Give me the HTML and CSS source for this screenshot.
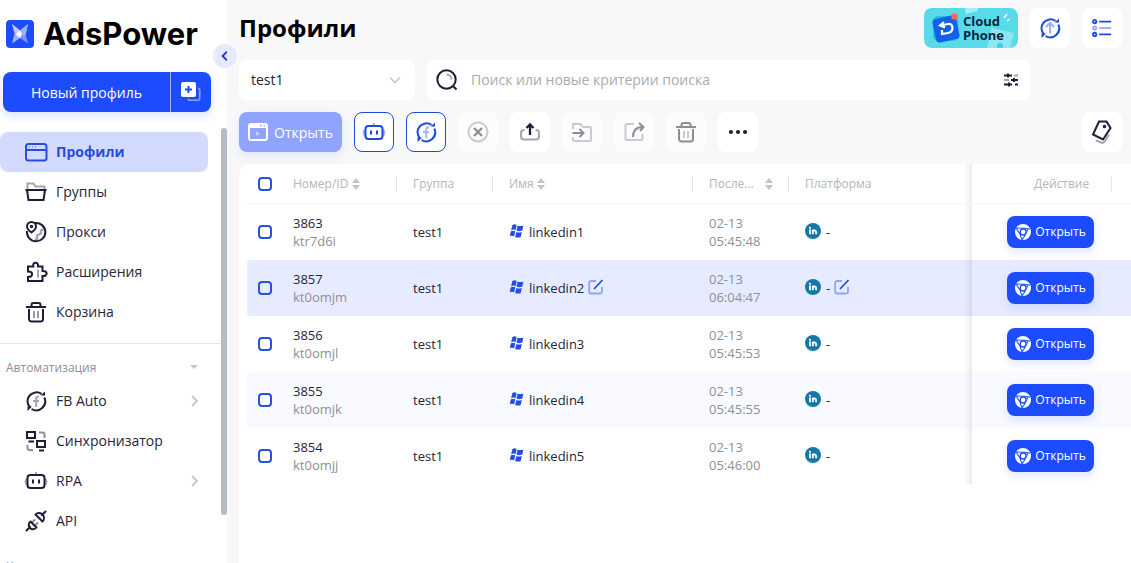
FILE: index.html
```html
<!DOCTYPE html>
<html lang="ru">
<head>
<meta charset="utf-8">
<title>AdsPower — Профили</title>
<link rel="stylesheet" href="styles.css">
</head>
<body>
<svg class="sprite" aria-hidden="true">
  <symbol id="i-robot" viewBox="0 0 24 24"><path d="M12 3v3M3 10c-2 1-2 4.500 0 5.500M21 10c2 1 2 4.500 0 5.500" opacity=".4"/><rect x="3.500" y="6" width="17" height="13" rx="3"/><path d="M9 10.500v4M15 10.500v4"/></symbol>
  <symbol id="i-ring" viewBox="0 0 24 24"><path d="M6 18.500A9 9 0 0 1 17.500 4.800M20.300 8.500A9 9 0 0 1 7.500 20"/><path d="M16.500 6.500h4.500V2.500zM3.500 17.500H8L3.500 22z" fill="currentColor" stroke="none"/></symbol>
  <symbol id="i-fb" viewBox="0 0 24 24"><use href="#i-ring"/><path d="M15 7.500h-.8c-1.500 0-2 .8-2 2V18M9 12h6" opacity=".4"/></symbol>
  <symbol id="i-trash" viewBox="0 0 24 24"><path d="M2 7h20M5 9v10a2.500 2.500 0 0 0 2.500 2.500h9A2.500 2.500 0 0 0 19 19V9M7.500 6.500V5a2 2 0 0 1 2-2h5a2 2 0 0 1 2 2v1.500"/><path d="M10 11v7M14 11v7" opacity=".45"/></symbol>
  <symbol id="i-sort" viewBox="0 0 8 12"><path d="M4 0l4 5H0zM4 12l4-5H0z"/></symbol>
  <symbol id="i-win" viewBox="1.500 1 12 12"><path d="M3.500 1.800c1.300-.8 2.600-.8 3.700 0L6.300 6.300c-1.200-.7-2.500-.7-3.800 0zM8 2.300c1.500.7 3 .6 5 0l-1 4.300c-1.500.7-3.200.8-4.900 0zM2.200 7.300c1.400-.7 2.600-.6 3.800 0l-.9 4.300c-1.200-.7-2.400-.7-3.900 0zM6.900 7.900c1.500.7 3.100.6 4.800 0l-1 4.200c-1.700.8-3.300.7-4.800 0z"/></symbol>
  <symbol id="i-in" viewBox="0 0 16 16"><circle cx="8" cy="8" r="8" fill="#1479a8"/><circle cx="5" cy="4.800" r="1.100" fill="#fff"/><path d="M5 6.600v4.600M7.800 11.200V6.600M7.900 8.800c.3-1.900 3.200-2 3.200.2v2.200" fill="none" stroke="#fff" stroke-width="1.800"/></symbol>
  <symbol id="i-edit" viewBox="0 0 16 16"><path d="M8 2H3a1.800 1.800 0 0 0-1.800 1.800v9A1.800 1.800 0 0 0 3 14.500h9.200a1.800 1.800 0 0 0 1.800-1.800V8" opacity=".45"/><path d="M6 10l8.500-9"/></symbol>
  <symbol id="i-chrome" viewBox="0 0 16 16"><circle cx="8" cy="8" r="8" fill="#fff"/><path d="M0 4.200Q6 3.600 15 5M4.700 9.600L.8 3.800M11 7.800Q10.500 12 6.800 16M13.300 4.600L10.800 9.500M5 9.500Q5.600 13 7.200 15.800" fill="none" stroke="#1d4cff" stroke-width="1.100"/><circle cx="8.200" cy="8" r="3" fill="#fff" stroke="#1d4cff" stroke-width="1.300"/></symbol>
</svg>
<div class="app">
  <aside class="sidebar">
    <a class="brand" href="#">
      <svg class="brand-mark" viewBox="0 0 28 28"><rect width="28" height="28" rx="4" fill="#1d4cff"/><path d="M6 4l8 6.500V18l-8 5.500L8.500 14z" fill="#9fb3ff"/><path d="M22 4l-8 6.500V18l8 5.500-2.500-9.500z" fill="#7b95ff"/><path d="M6 4l11 9-3 5-4-4z" fill="#b9c7ff"/><path d="M22 4l-8 6.500 4 6 2-3z" fill="#9db1ff"/><path d="M13.500 10.500l2.500 3.500-2 4-4-3.500z" fill="#fff"/></svg>
      <span>AdsPower</span>
    </a>
    <div class="new-profile">
      <button class="new-main" type="button">Новый профиль</button>
      <button class="new-batch" type="button" aria-label="Создать несколько профилей"><svg viewBox="0 0 20 20" class="s20"><path d="M17 6.500h.5a1.200 1.200 0 0 1 1.200 1.200v9a1.500 1.500 0 0 1-1.500 1.500H8.500a1.200 1.200 0 0 1-1.200-1.200v-.5" fill="none" stroke="#8aa1ff" stroke-width="1.600"/><rect width="15" height="15" rx="2" fill="#fff"/><path d="M7.500 4v7M4 7.500h7" stroke="#1d4cff" stroke-width="2"/></svg></button>
    </div>
    <div class="nav-area">
      <nav>
        <a class="nav-item active" href="#"><svg class="icon" viewBox="0 0 24 24"><rect x="2" y="4" width="20.500" height="16.500" rx="2.500"/><path d="M2 10h20.500"/><path d="M5 7h1M8 7h1M11 7h1" opacity=".4"/></svg><span>Профили</span></a>
        <a class="nav-item" href="#"><svg class="icon" viewBox="0 0 24 24"><path d="M3.500 9V3.500h6l2 3h9V9" opacity=".4"/><path d="M1.500 10h21M3 10l1.500 10h15L21 10"/></svg><span>Группы</span></a>
        <a class="nav-item" href="#"><svg class="icon" viewBox="0 0 24 24"><path d="M20 9l-3 1.500v3l-4 2V19l-2 1" opacity=".4" stroke-width="2.400"/><path d="M11 3a9.200 9.200 0 1 1-8 8"/><path d="M7.500 12.500C4 10 3 8 3 6.500a4.500 4.500 0 0 1 9 0c0 1.500-1 3.500-4.500 6z"/><circle cx="7.500" cy="6.500" r=".8"/></svg><span>Прокси</span></a>
        <a class="nav-item" href="#"><svg class="icon" viewBox="0 0 24 24"><path d="M4 6.500h5.300C8 1.500 15 1.500 14 6.500h4.500V11c5.500-.5 5.500 5.500 0 5v5H4v-4c5.500 0 5.500-6 0-5.500z"/><path d="M14 9.500v8" opacity=".4"/></svg><span>Расширения</span></a>
        <a class="nav-item" href="#"><svg class="icon"><use href="#i-trash"/></svg><span>Корзина</span></a>
        <hr class="nav-line">
        <button class="nav-label" type="button"><span>Автоматизация</span><svg class="caret" viewBox="0 0 10 6"><path d="M1 1h8L5 5z"/></svg></button>
        <a class="nav-item" href="#"><svg class="icon"><use href="#i-fb"/></svg><span>FB Auto</span><svg class="arrow" viewBox="0 0 10 12"><path d="M2 1l5 5-5 5"/></svg></a>
        <a class="nav-item" href="#"><svg class="icon" viewBox="0 0 24 24"><path d="M15 3.500h3.500a2 2 0 0 1 2 2V9M9 21H5.500a2 2 0 0 1-2-2v-3" opacity=".5"/><rect x="3" y="3" width="8" height="6"/><rect x="13" y="12" width="8" height="6"/><path d="M4.500 12.500H10M15 21.500h5"/></svg><span>Синхронизатор</span></a>
        <a class="nav-item" href="#"><svg class="icon"><use href="#i-robot"/></svg><span>RPA</span><svg class="arrow" viewBox="0 0 10 12"><path d="M2 1l5 5-5 5"/></svg></a>
        <a class="nav-item" href="#"><svg class="icon round" viewBox="0 0 24 24"><path d="M2.500 21.500L6 18M6.500 12.500l6 6c-2 2.500-5 2-6.500.5S4 14.500 6.500 12.500zM21.500 2.500L18 6M11.500 5.500l7 7c2.500-2.500 1.500-5.500 0-7s-4.500-2.500-7 0z"/><path d="M8.500 13l2-2M11.500 16l2-2" opacity=".5"/></svg><span>API</span></a>
        <button class="nav-label nav-label-next" type="button"><span>Команда</span><svg class="caret" viewBox="0 0 10 6"><path d="M1 1h8L5 5z"/></svg></button>
      </nav>
      <div class="scroll-thumb"></div>
    </div>
    <button class="collapse" type="button" aria-label="Свернуть меню"><svg viewBox="0 0 10 10"><path d="M6.500 1.500L3 5l3.500 3.500"/></svg></button>
  </aside>

  <main class="main">
    <header class="top">
      <h1>Профили</h1>
      <a class="cloud" href="#">
        <svg class="cloud-art" viewBox="0 0 94 40"><rect width="94" height="40" fill="#58dbe9"/><path d="M41 0h13v3l-12 3z" fill="#a5edf4"/><path d="M68 20l22 5-4 15H63z" fill="#8ce8f0"/><path d="M73 38a3 3 0 0 1 6 0v2h-6z" fill="#45cfe0"/><rect x="9" y="8" width="25" height="25" rx="5" fill="#31b9dd"/><rect x="10" y="9" width="24" height="24" rx="4" fill="#1261e8" transform="rotate(-12 22 21)"/><path d="M20 14l-4 3.500 5 2M17 17.500l7-1.500c6-1 6 8 0 9l-6 1v-4" fill="none" stroke="#fff" stroke-width="2.200"/><circle cx="30.500" cy="8.500" r="3.200" fill="#ff6450"/><path d="M80 10l3-4M83 13l3-2" stroke="#fff" stroke-width="1.500"/></svg>
        <span class="cloud-text">Cloud Phone</span>
      </a>
      <button class="tile blue" type="button" aria-label="Обновить"><svg class="icon" viewBox="0 0 24 24"><use href="#i-ring"/><path d="M12 17.500V8M8 11l4-4 4 4" opacity=".45"/></svg></button>
      <button class="tile blue" type="button" aria-label="Список"><svg class="icon" viewBox="0 0 24 24"><circle cx="4" cy="5" r="1.800"/><path d="M9 5h13M9 19h13"/><circle cx="4" cy="19" r="1.800"/><g opacity=".45"><circle cx="4" cy="12" r="1.800"/><path d="M9 12h13"/></g></svg></button>
    </header>

    <div class="filters">
      <div class="select-wrap">
        <select aria-label="Группа"><option>test1</option></select>
        <svg class="chev" viewBox="0 0 12 8"><path d="M1 1.500l5 5 5-5"/></svg>
      </div>
      <div class="search">
        <svg class="icon" viewBox="0 0 24 24"><circle cx="11.500" cy="11.500" r="9.200"/><path d="M18.500 18.500l3 3"/><path d="M11.500 6.500a5 5 0 0 1 5 5" opacity=".4"/></svg>
        <input type="search" aria-label="Поиск" placeholder="Поиск или новые критерии поиска">
        <button class="tune" type="button" aria-label="Фильтры"><svg viewBox="0 0 16 14"><path d="M1 2.500h8M5 .5v4M8 7h7M11 5v4M1 11.500h8M6 9.500v4M12 11.500h3"/><path d="M11 2.500h4M1 7h5" opacity=".4"/></svg></button>
      </div>
    </div>

    <div class="toolbar">
      <button class="open-all" type="button"><svg viewBox="0 0 20 18"><rect x="1" y="1" width="18" height="16" rx="2" fill="none" stroke="#fff" stroke-width="2"/><path d="M1 1h18v4H1z" fill="#fff"/><path d="M12 2.500h1.500M15.500 2.500H17" stroke="#8fa3ff" stroke-width="1.500"/><path d="M8 8l4 2.500L8 13z" fill="#c9d3ff"/></svg><span>Открыть</span></button>
      <button class="tile blue outlined" type="button" aria-label="RPA"><svg class="icon"><use href="#i-robot"/></svg></button>
      <button class="tile blue outlined" type="button" aria-label="FB Auto"><svg class="icon"><use href="#i-fb"/></svg></button>
      <button class="tile off" type="button" aria-label="Закрыть" disabled><svg class="icon" viewBox="0 0 24 24"><circle cx="12" cy="12" r="9.500" opacity=".45"/><path d="M8 8l8 8M16 8l-8 8" stroke-width="2.300"/></svg></button>
      <button class="tile" type="button" aria-label="Экспорт"><svg class="icon" viewBox="0 0 24 24"><path d="M6.500 10H6a3 3 0 0 0-3 3v3.500a3 3 0 0 0 3 3h12a3 3 0 0 0 3-3V13a3 3 0 0 0-3-3h-.5" opacity=".4"/><path d="M12 15V5M8.500 8L12 4.500 15.500 8" stroke-width="2.300"/></svg></button>
      <button class="tile off" type="button" aria-label="Переместить в группу" disabled><svg class="icon" viewBox="0 0 24 24"><path d="M3 9V4h7.500l2.500 3h6.500A1.500 1.500 0 0 1 21 8.500v11a1.500 1.500 0 0 1-1.500 1.500h-15A1.500 1.500 0 0 1 3 19.500V17" opacity=".45"/><path d="M2.500 13H13M9.500 9l4 4-4 4"/></svg></button>
      <button class="tile off" type="button" aria-label="Поделиться" disabled><svg class="icon" viewBox="0 0 24 24"><path d="M12 4H5a1.500 1.500 0 0 0-1.500 1.500v13A1.500 1.500 0 0 0 5 20h14a1.500 1.500 0 0 0 1.500-1.500V14" opacity=".45"/><path d="M11 17c0-6 2.500-10 10-10M17 3l4.500 4L18 11"/></svg></button>
      <button class="tile off" type="button" aria-label="Удалить" disabled><svg class="icon"><use href="#i-trash"/></svg></button>
      <button class="tile" type="button" aria-label="Ещё"><svg class="icon dots" viewBox="0 0 24 24"><circle cx="3.500" cy="12" r="2.500"/><circle cx="12" cy="12" r="2.500"/><circle cx="20.500" cy="12" r="2.500"/></svg></button>
      <button class="tile tag" type="button" aria-label="Теги"><svg class="icon" viewBox="0 0 24 24"><path d="M6 20.500l6.500 2.500 2-1.200 4.500-7.300" opacity=".4"/><path d="M9 1.500h7.500l4 6.500-7.500 11.500L3 14.500z"/><circle cx="14.500" cy="6.500" r=".8"/></svg></button>
    </div>

    <section class="panel">
      <table>
        <colgroup><col class="c-check"><col class="c-id"><col class="c-group"><col class="c-name"><col class="c-last"><col><col class="c-act"><col class="c-gear"></colgroup>
        <thead>
          <tr>
            <th><input type="checkbox" aria-label="Выбрать все"></th>
            <th class="sep">Номер/ID <svg class="sort"><use href="#i-sort"/></svg></th>
            <th class="sep">Группа</th>
            <th class="sep">Имя <svg class="sort"><use href="#i-sort"/></svg></th>
            <th class="sep"><span class="spread">После... <svg class="sort"><use href="#i-sort"/></svg></span></th>
            <th>Платформа</th>
            <th class="act sep">Действие</th>
            <th></th>
          </tr>
        </thead>
        <tbody>
          <tr>
            <td><input type="checkbox" aria-label="Выбрать 3863"></td>
            <td>3863<br><span class="muted">ktr7d6i</span></td>
            <td>test1</td>
            <td><span class="inline"><svg class="win"><use href="#i-win"/></svg>linkedin1</span></td>
            <td class="muted">02-13<br>05:45:48</td>
            <td><span class="inline"><svg class="in"><use href="#i-in"/></svg>-</span></td>
            <td class="act"><button class="open" type="button"><svg><use href="#i-chrome"/></svg>Открыть</button></td>
            <td></td>
          </tr>
          <tr class="hovered">
            <td><input type="checkbox" aria-label="Выбрать 3857"></td>
            <td>3857<br><span class="muted">kt0omjm</span></td>
            <td>test1</td>
            <td><span class="inline"><svg class="win"><use href="#i-win"/></svg>linkedin2<button class="edit" type="button" aria-label="Изменить имя"><svg><use href="#i-edit"/></svg></button></span></td>
            <td class="muted">02-13<br>06:04:47</td>
            <td><span class="inline"><svg class="in"><use href="#i-in"/></svg>-<button class="edit" type="button" aria-label="Изменить платформу"><svg><use href="#i-edit"/></svg></button></span></td>
            <td class="act"><button class="open" type="button"><svg><use href="#i-chrome"/></svg>Открыть</button></td>
            <td></td>
          </tr>
          <tr>
            <td><input type="checkbox" aria-label="Выбрать 3856"></td>
            <td>3856<br><span class="muted">kt0omjl</span></td>
            <td>test1</td>
            <td><span class="inline"><svg class="win"><use href="#i-win"/></svg>linkedin3</span></td>
            <td class="muted">02-13<br>05:45:53</td>
            <td><span class="inline"><svg class="in"><use href="#i-in"/></svg>-</span></td>
            <td class="act"><button class="open" type="button"><svg><use href="#i-chrome"/></svg>Открыть</button></td>
            <td></td>
          </tr>
          <tr class="striped">
            <td><input type="checkbox" aria-label="Выбрать 3855"></td>
            <td>3855<br><span class="muted">kt0omjk</span></td>
            <td>test1</td>
            <td><span class="inline"><svg class="win"><use href="#i-win"/></svg>linkedin4</span></td>
            <td class="muted">02-13<br>05:45:55</td>
            <td><span class="inline"><svg class="in"><use href="#i-in"/></svg>-</span></td>
            <td class="act"><button class="open" type="button"><svg><use href="#i-chrome"/></svg>Открыть</button></td>
            <td></td>
          </tr>
          <tr>
            <td><input type="checkbox" aria-label="Выбрать 3854"></td>
            <td>3854<br><span class="muted">kt0omjj</span></td>
            <td>test1</td>
            <td><span class="inline"><svg class="win"><use href="#i-win"/></svg>linkedin5</span></td>
            <td class="muted">02-13<br>05:46:00</td>
            <td><span class="inline"><svg class="in"><use href="#i-in"/></svg>-</span></td>
            <td class="act"><button class="open" type="button"><svg><use href="#i-chrome"/></svg>Открыть</button></td>
            <td></td>
          </tr>
        </tbody>
      </table>
    </section>
  </main>
</div>
</body>
</html>
```

FILE: styles.css
```css
:root {
  --blue: #1d4cff;
  --icon-blue: #1f49e0;
  --ink: #1d1d38;
  --line: #e4e5ea;
}

* { box-sizing: border-box; }

body {
  margin: 0;
  font-family: "Open Sans", "Noto Sans", sans-serif;
  font-size: 14px;
  color: #25253a;
  background: #f8f8f9;
}

button, input, select { font: inherit; color: inherit; }
button { border: 0; padding: 0; background: none; cursor: pointer; }
a { color: inherit; text-decoration: none; }

.sprite { position: absolute; width: 0; height: 0; }
svg { flex: none; }

.icon {
  width: 24px;
  height: 24px;
  fill: none;
  stroke: currentColor;
  stroke-width: 2;
}
.round { stroke-linecap: round; stroke-linejoin: round; }

.app { display: flex; height: 100vh; overflow: hidden; }

/* Sidebar */
.sidebar {
  position: relative;
  display: flex;
  flex-direction: column;
  flex: none;
  width: 227px;
  background: #fff;
}

.brand {
  display: flex;
  align-items: center;
  gap: 9px;
  height: 72px;
  padding: 0 6px 4px;
  color: #000;
  font: 700 31px/40px Inter, sans-serif;
}
.brand-mark { width: 28px; height: 28px; }

.new-profile {
  display: flex;
  height: 40px;
  margin: 0 16px 0 3px;
  flex: none;
  border-radius: 8px;
  background: var(--blue);
  color: #fff;
  font-size: 14px;
  box-shadow: 0 4px 10px rgba(29, 76, 255, .16);
}
.new-main { flex: 1; }
.new-batch {
  display: grid;
  place-items: center;
  width: 41px;
  border-left: 1px solid #a3b5ff;
}
.s20 { width: 20px; height: 20px; }

.nav-area { position: relative; flex: 1; min-height: 0; margin-top: 16px; overflow: hidden; }
nav { padding-top: 4px; }

.scroll-thumb {
  position: absolute;
  top: 0;
  right: 0;
  width: 6px;
  height: 89%;
  border-radius: 3px;
  background: #b6bcc4;
}

.nav-item {
  display: flex;
  align-items: center;
  gap: 8px;
  height: 40px;
  margin-right: 19px;
  padding: 0 8px 0 24px;
  border-radius: 8px;
  font-size: 14px;
  line-height: 20px;
}
.nav-item .icon { color: var(--ink); }
.nav-item.active { background: #d2dbff; color: #2a4be0; font-weight: 700; }
.nav-item.active .icon { color: #2a4be0; }

.nav-line { height: 1px; margin: 11px 6px 9px 0; border: 0; background: var(--line); }

.nav-label {
  display: flex;
  align-items: center;
  justify-content: space-between;
  width: 202px;
  height: 28px;
  padding-left: 6px;
  color: #8e8e9a;
  font-size: 12px;
}
.nav-label-next { margin-top: 11px; }
.caret { width: 10px; height: 6px; margin-right: 3px; fill: #c4c5cb; }
.arrow { width: 10px; height: 12px; margin-left: auto; fill: none; stroke: #c8c9ce; stroke-width: 2; }

.collapse {
  position: absolute;
  top: 44px;
  right: -10px;
  z-index: 2;
  display: grid;
  place-items: center;
  width: 24px;
  height: 24px;
  border-radius: 50%;
  background: #e5eaff;
}
.collapse svg { width: 12px; height: 12px; fill: none; stroke: #2444c8; stroke-width: 1.600; }

/* Main column */
.main {
  display: flex;
  flex: 1;
  flex-direction: column;
  gap: 12px;
  min-width: 0;
  padding: 8px 0 0 12px;
}

.top, .filters, .toolbar { display: flex; gap: 12px; flex: none; height: 40px; }
.top { padding-right: 9px; }
h1 { flex: 1; margin: 0; font-size: 24px; line-height: 40px; color: #000; }

.cloud {
  position: relative;
  display: flex;
  align-items: center;
  width: 94px;
  padding-left: 39px;
  border-radius: 8px;
  overflow: hidden;
  color: #0d2340;
  font: 700 13px/14px "Open Sans", sans-serif;
}
.cloud-art { position: absolute; inset: 0; width: 100%; height: 100%; }
.cloud-text { position: relative; }

.tile {
  display: grid;
  place-items: center;
  flex: none;
  width: 40px;
  height: 40px;
  border-radius: 8px;
  background: #fff;
  color: var(--ink);
}
.blue { color: var(--icon-blue); }
.outlined { border: 1px solid var(--icon-blue); }
.off { background: #fcfcfc; color: #8d8d9a; }
.dots { fill: currentColor; stroke: none; }
.toolbar .dots { width: 20px; height: 20px; }
.top .tile:last-child .icon { width: 22px; height: 22px; }
.tag { margin-left: auto; }

.select-wrap { position: relative; width: 176px; }
.select-wrap select {
  width: 100%;
  height: 40px;
  padding: 0 12px 2px;
  border: 0;
  border-radius: 8px;
  appearance: none;
  background: #fff;
}
.chev {
  position: absolute;
  top: 16px;
  right: 14px;
  width: 12px;
  height: 8px;
  fill: none;
  stroke: #c8c9ce;
  stroke-width: 1.600;
  pointer-events: none;
}

.search {
  display: flex;
  flex: 1;
  align-items: center;
  margin-right: 101px;
  padding: 0 11px 0 8px;
  border-radius: 8px;
  background: #fff;
}
.search .icon { color: var(--ink); }
.search input { flex: 1; min-width: 0; padding: 0 12px 2px; border: 0; outline: 0; background: none; }
.search input::placeholder { color: #aaaab2; opacity: 1; }
.tune svg { display: block; width: 16px; height: 14px; fill: none; stroke: var(--ink); stroke-width: 2; }

.toolbar { padding-right: 9px; }
.open-all {
  display: flex;
  align-items: center;
  justify-content: center;
  gap: 6px;
  width: 103px;
  border-radius: 8px;
  background: #8fa3ff;
  color: #fff;
  box-shadow: 0 4px 10px rgba(29, 76, 255, .1);
}
.open-all svg { width: 20px; height: 18px; }

/* Table */
.panel {
  flex: 1;
  min-height: 0;
  padding-left: 8px;
  border-radius: 12px 0 0 0;
  background: #fff;
  overflow: hidden;
}
table { width: 100%; table-layout: fixed; border-collapse: separate; border-spacing: 0; font-size: 13px; line-height: 18px; }
.c-check { width: 30px; }
.c-id { width: 120px; }
.c-group, .c-last { width: 96px; }
.c-name { width: 200px; }
.c-act { width: 140px; }
.c-gear { width: 19px; }

th {
  height: 40px;
  padding: 0 0 0 16px;
  border-bottom: 1px solid #f5f5f8;
  color: #b4b5bc;
  font-size: 12px;
  font-weight: 400;
  text-align: left;
  white-space: nowrap;
}
.sep { background: linear-gradient(var(--line), var(--line)) no-repeat right center / 1px 16px; }
th:first-child, td:first-child { padding-left: 11px; }
.spread { display: flex; align-items: center; justify-content: space-between; padding-right: 16px; }
.sort { width: 8px; height: 12px; fill: #c3c4c9; vertical-align: -2px; }

td { height: 56px; padding: 0 0 0 16px; }
.muted { color: #8f8f99; }
.inline { display: flex; align-items: center; }
.win { width: 14px; height: 14px; margin: 0 5px 2px 1px; fill: #234ee6; }
.in { width: 16px; height: 16px; margin: 0 5px 2px 0; }
.edit { margin-left: 4px; }
.edit svg { display: block; width: 16px; height: 16px; margin-bottom: 2px; fill: none; stroke: #234ee6; stroke-width: 1.800; }

.hovered td { background: #e7ebff; }
.striped td { background: #f9faff; }
.hovered td:first-child, .striped td:first-child { border-radius: 4px 0 0 4px; }

.act { position: relative; padding-left: 35px; }
th.act { padding-left: 62px; }
.act::before {
  content: "";
  position: absolute;
  top: 0;
  bottom: 0;
  left: -8px;
  width: 8px;
  background: linear-gradient(to right, rgba(0, 0, 0, 0), rgba(0, 0, 0, .08));
}

.open {
  display: flex;
  align-items: center;
  justify-content: center;
  gap: 4px;
  width: 87px;
  height: 32px;
  border-radius: 8px;
  background: var(--blue);
  color: #fff;
  font-size: 12px;
  box-shadow: 0 4px 10px rgba(29, 76, 255, .14);
}
.open svg { width: 16px; height: 16px; }

input[type="checkbox"] {
  display: block;
  width: 14px;
  height: 14px;
  margin: 0;
  border: 2px solid #2a50dc;
  border-radius: 4px;
  appearance: none;
  background: #fff;
}
.hovered input[type="checkbox"] { background: transparent; }
```
